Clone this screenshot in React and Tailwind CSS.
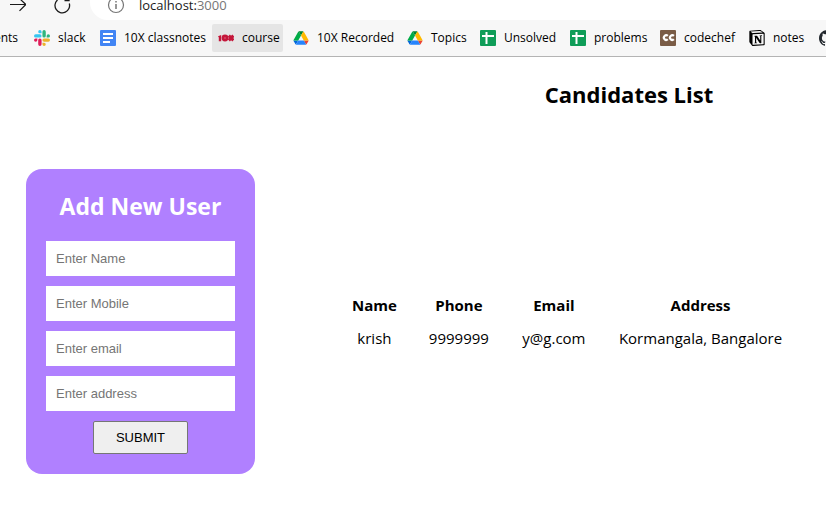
import { SiNotion, SiGithub } from "react-icons/si";

function SlackIcon() {
  const arm =
    "M5.042 15.165a2.528 2.528 0 0 1-2.52 2.523A2.528 2.528 0 0 1 0 15.165a2.527 2.527 0 0 1 2.522-2.52h2.52v2.52zM6.313 15.165a2.527 2.527 0 0 1 2.521-2.52 2.527 2.527 0 0 1 2.521 2.52v6.313A2.528 2.528 0 0 1 8.834 24a2.528 2.528 0 0 1-2.521-2.522v-6.313z";
  return (
    <svg viewBox="0 0 24 24" className="size-4" aria-hidden="true">
      <path d={arm} fill="#E01E5A" />
      <path d={arm} fill="#36C5F0" transform="rotate(90 12 12)" />
      <path d={arm} fill="#2EB67D" transform="rotate(180 12 12)" />
      <path d={arm} fill="#ECB22E" transform="rotate(270 12 12)" />
    </svg>
  );
}

function DocsIcon() {
  return (
    <svg viewBox="0 0 16 16" className="size-4" aria-hidden="true">
      <rect width="16" height="16" rx="1" fill="#4285f4" />
      <path d="M3 4h10M3 8h10M3 12h7" stroke="#fff" strokeWidth="2" />
    </svg>
  );
}

function CourseIcon() {
  return (
    <svg viewBox="0 0 16 16" className="size-4" aria-hidden="true">
      <path d="M0 6.200L3.200 5V11.200H0.800V7.500z" fill="#c4163a" />
      <circle cx="7" cy="8" r="3.4" fill="#c4163a" />
      <path d="M6 8h2" stroke="#dd5f78" strokeWidth="1" />
      <path d="M10.800 5.600L15.400 10.400M15.400 5.600L10.800 10.400" stroke="#c4163a" strokeWidth="3" />
    </svg>
  );
}

function DriveIcon() {
  return (
    <svg viewBox="-3 -5 93 88" className="size-4" aria-hidden="true">
      <path d="m6.6 66.85 3.85 6.65c.8 1.4 1.95 2.5 3.3 3.3l13.75-23.8h-27.5c0 1.55.4 3.1 1.2 4.5z" fill="#0066da" />
      <path d="m43.65 25-13.75-23.8c-1.35.8-2.5 1.9-3.3 3.3l-25.4 44a9.06 9.06 0 0 0 -1.2 4.5h27.5z" fill="#00ac47" />
      <path d="m73.55 76.8c1.35-.8 2.5-1.9 3.3-3.3l1.6-2.75 7.65-13.25c.8-1.4 1.2-2.95 1.2-4.5h-27.502l5.852 11.5z" fill="#ea4335" />
      <path d="m43.65 25 13.75-23.8c-1.35-.8-2.9-1.2-4.5-1.2h-18.5c-1.6 0-3.15.45-4.5 1.2z" fill="#00832d" />
      <path d="m59.8 53h-32.3l-13.75 23.8c1.35.8 2.9 1.2 4.5 1.2h50.8c1.6 0 3.15-.45 4.5-1.2z" fill="#2684fc" />
      <path d="m73.4 26.5-12.7-22c-.8-1.4-1.95-2.5-3.3-3.3l-13.75 23.8 16.15 28h27.45c0-1.55-.4-3.1-1.2-4.5z" fill="#ffba00" />
    </svg>
  );
}

function SheetsIcon() {
  return (
    <svg viewBox="0 0 16 16" className="size-4" aria-hidden="true">
      <rect width="16" height="16" rx="1" fill="#0f9d58" />
      <path d="M2 6h12" stroke="#fff" strokeWidth="2" />
      <path d="M6.500 2v12" stroke="#fff" strokeWidth="2" />
    </svg>
  );
}

function CodechefIcon() {
  return (
    <svg viewBox="0 0 16 16" className="size-4" aria-hidden="true">
      <rect width="16" height="16" rx="1" fill="#7a5c46" />
      <path
        d="M7.800 5.900A2.300 2.300 0 1 0 7.800 9.200M13.900 5.900A2.300 2.300 0 1 0 13.900 9.200"
        fill="none"
        stroke="#fff"
        strokeWidth="2.200"
      />
    </svg>
  );
}

const bookmarks = [
  { label: "slack", icon: <SlackIcon />, width: "w-[66px]" },
  { label: "10X classnotes", icon: <DocsIcon />, width: "w-[118px]" },
  { label: "course", icon: <CourseIcon />, width: "w-[75px]", active: true },
  { label: "10X Recorded", icon: <DriveIcon />, width: "w-[114px]" },
  { label: "Topics", icon: <DriveIcon />, width: "w-[73px]" },
  { label: "Unsolved", icon: <SheetsIcon />, width: "w-[90px]" },
  { label: "problems", icon: <SheetsIcon />, width: "w-[90px]" },
  { label: "codechef", icon: <CodechefIcon />, width: "w-[89px]" },
  { label: "notes", icon: <SiNotion className="size-4" />, width: "w-[70px]" },
];

function BrowserBar() {
  return (
    <header className="border-b border-[#b4b4b4] bg-[#f7f7f7]">
      <div className="flex h-5">
        <div className="flex w-[90px] shrink-0 items-start gap-7 pl-[10px]">
          <button type="button" aria-label="Forward">
            <svg viewBox="0 0 16 13" className="h-[13px] w-4" fill="none" stroke="#1a1a1a" strokeWidth="1.2" aria-hidden="true">
              <path d="M0 4.500H15.500M9.500 -1.500L15.800 4.500L9.500 10.800" />
            </svg>
          </button>
          <button type="button" aria-label="Refresh">
            <svg viewBox="0 0 18 14" className="h-[14px] w-[18px]" fill="none" stroke="#1a1a1a" strokeWidth="1.3" aria-hidden="true">
              <path d="M15.300 3.500A7.300 7.300 0 1 1 3.500 0M15 -2V0.700H10.500" />
            </svg>
          </button>
        </div>
        <div className="flex flex-1 items-start gap-[14px] rounded-bl-[18px] bg-white pl-[17px]">
          <svg viewBox="0 0 18 14" className="h-[14px] w-[18px] shrink-0" fill="none" stroke="#767676" strokeWidth="1.2" aria-hidden="true">
            <circle cx="9" cy="5" r="7.5" />
            <path d="M9 4v5M9 1v1.500" strokeWidth="1.5" />
          </svg>
          <p className="text-[13px] leading-[10px] text-[#1a1a1a]">
            localhost:<span className="text-[#767676]">3000</span>
          </p>
        </div>
      </div>
      <nav aria-label="Bookmarks" className="flex h-9 items-center overflow-hidden text-[12px]">
        <a href="#ents" className="flex w-7 shrink-0 justify-end pr-[10px]">
          ents
        </a>
        {bookmarks.map((b) => (
          <div key={b.label} className={`${b.width} shrink-0 pr-1`}>
            <a
              href={`#${b.label}`}
              className={`flex h-7 items-center gap-2 whitespace-nowrap pl-[6px] ${b.active ? "rounded-xs bg-[#e5e5e5]" : ""}`}
            >
              <span className="shrink-0">{b.icon}</span>
              {b.label}
            </a>
          </div>
        ))}
        <a href="#github" aria-label="github" className="shrink-0 pl-[6px]">
          <SiGithub className="size-4 text-[#24292f]" />
        </a>
      </nav>
    </header>
  );
}

const fields = [
  { name: "name", placeholder: "Enter Name" },
  { name: "mobile", placeholder: "Enter Mobile" },
  { name: "email", placeholder: "Enter email" },
  { name: "address", placeholder: "Enter address" },
];

function AddUserForm() {
  return (
    <form
      onSubmit={(e) => e.preventDefault()}
      className="flex w-[229px] shrink-0 flex-col items-center gap-[10px] rounded-2xl bg-[#b080ff] p-5"
    >
      <h2 className="mb-2 text-[23px] leading-[34px] font-bold whitespace-nowrap text-white">Add New User</h2>
      {fields.map((f) => (
        <input
          key={f.name}
          name={f.name}
          aria-label={f.placeholder}
          placeholder={f.placeholder}
          className="h-[35px] w-full bg-white px-[10px] font-['Liberation_Sans',Arial,sans-serif] text-[13px] placeholder:text-[#757575]"
        />
      ))}
      <button
        type="submit"
        className="h-[33px] w-[95px] rounded-xs border border-[#767676] bg-[#efefef] font-['Liberation_Sans',Arial,sans-serif] text-[13px]"
      >
        SUBMIT
      </button>
    </form>
  );
}

const candidates = [{ name: "krish", phone: "9999999", email: "y@g.com", address: "Kormangala, Bangalore" }];

function CandidatesTable() {
  return (
    <table className="text-center text-[15px] leading-[23px] whitespace-nowrap">
      <thead>
        <tr>
          <th className="px-4 py-[5px]">Name</th>
          <th className="px-4 py-[5px]">Phone</th>
          <th className="min-w-[98px] px-4 py-[5px]">Email</th>
          <th className="px-4 py-[5px]">Address</th>
        </tr>
      </thead>
      <tbody>
        {candidates.map((c) => (
          <tr key={c.phone}>
            <td className="px-4 py-[5px]">{c.name}</td>
            <td className="px-4 py-[5px]">{c.phone}</td>
            <td className="px-4 py-[5px]">{c.email}</td>
            <td className="px-4 py-[5px]">{c.address}</td>
          </tr>
        ))}
      </tbody>
    </table>
  );
}

export default function App() {
  return (
    <div className="min-h-screen bg-white font-['Segoe_UI','Open_Sans',sans-serif] text-black">
      <BrowserBar />
      <main className="pb-10">
        <h1 className="pt-5 pl-[432px] text-center text-[22px] leading-[34px] font-bold">Candidates List</h1>
        <div className="mt-[58px] flex items-center gap-[81px] pl-[26px]">
          <AddUserForm />
          <CandidatesTable />
        </div>
      </main>
    </div>
  );
}
